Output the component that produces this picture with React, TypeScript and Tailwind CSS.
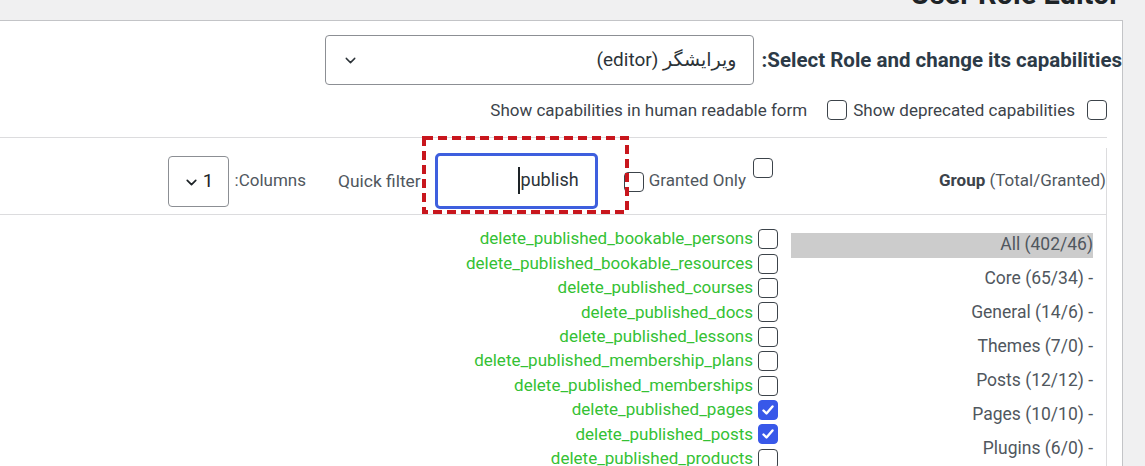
import React from "react";
import { ChevronDown } from "lucide-react";

function Box({ checked = false, className = "" }: { checked?: boolean; className?: string }) {
  return (
    <span
      className={
        "flex h-5 w-5 shrink-0 items-center justify-center rounded-[4px] border " +
        (checked ? "border-[#3858e9] bg-[#3858e9]" : "border-[#3c434a] bg-white") +
        " " +
        className
      }
    >
      {checked && (
        <svg width="16" height="16" viewBox="0 0 16 16" fill="none">
          <path d="M3.5 8.5l3 3L12.5 4.5" stroke="white" strokeWidth="2.4" strokeLinecap="round" strokeLinejoin="round" />
        </svg>
      )}
    </span>
  );
}

const caps: [string, boolean][] = [
  ["delete_published_bookable_persons", false],
  ["delete_published_bookable_resources", false],
  ["delete_published_courses", false],
  ["delete_published_docs", false],
  ["delete_published_lessons", false],
  ["delete_published_membership_plans", false],
  ["delete_published_memberships", false],
  ["delete_published_pages", true],
  ["delete_published_posts", true],
  ["delete_published_products", false],
];

const groups = [
  "All (402/46)",
  "Core (65/34) -",
  "General (14/6) -",
  "Themes (7/0) -",
  "Posts (12/12) -",
  "Pages (10/10) -",
  "Plugins (6/0) -",
];

export default function App() {
  return (
    <div className="h-[466px] w-[1145px] overflow-hidden bg-[#f0f0f1] font-[Roboto,'DejaVu_Sans',sans-serif]">
      <div className="flex h-[20px] justify-end overflow-hidden pr-[25px]">
        <h1 className="-mt-[20px] h-[29px] whitespace-nowrap text-[29px] font-bold leading-none text-[#1d2327]">User Role Editor</h1>
      </div>
      <div className="mr-[22px] h-[446px] border-r border-t border-[#c3c4c7] bg-white">
        {/* Role select row */}
        <div className="mt-[14px] flex items-center justify-end">
          <div className="flex h-[50px] w-[429px] items-center justify-between rounded-[4px] border border-[#8c8f94] bg-white pl-[16px] pr-[16px]">
            <ChevronDown size={17} strokeWidth={2} className="text-[#2c3338]" />
            <span dir="rtl" className="text-[19px] text-[#2c3338]">ویرایشگر (editor)</span>
          </div>
          <div className="ml-[8px] whitespace-nowrap text-[20.5px] font-bold leading-none text-[#2c3a47]">
            :Select Role and change its capabilities
          </div>
        </div>
        {/* options row */}
        <div className="mt-[15px] flex h-[20px] items-center justify-end pr-[15px] text-[17px] leading-5 text-[#3c434a]">
          <span>Show capabilities in human readable form</span>
          <Box className="ml-[20px]" />
          <span className="ml-[6px]">Show deprecated capabilities</span>
          <Box className="ml-[12px]" />
        </div>
        <div className="mr-[15px] mt-[17px] border-b border-[#dcdcde]" />
        {/* table */}
        <div className="mr-[15px] mt-[10px] h-[400px] border-r border-[#dcdcde]">
          <div className="relative flex h-[67px] items-center justify-end border-b border-[#dcdcde] text-[17px] text-[#50575e]">
            <div className="flex h-[51px] w-[61px] items-center justify-center gap-[3px] rounded-[4px] border border-[#8c8f94]">
              <ChevronDown size={17} strokeWidth={2.4} className="mt-[3px] text-[#1d2327]" />
              <span className="text-[19px] text-[#1d2327]">1</span>
            </div>
            <span className="ml-[6px]">:Columns</span>
            <span className="ml-[32px] text-[17.4px]">Quick filter</span>
            <div className="ml-[14px] flex h-[56px] w-[163px] items-center justify-end rounded-[5px] border-[3px] border-[#3e5fde] pr-[16px]">
              <span className="mb-[2px] mr-[1px] h-[27px] w-[2px] bg-[#1d2327]" />
              <span className="mb-[3px] text-[18px] leading-none text-[#2c3338]">publish</span>
            </div>
            <Box className="ml-[26px] mt-[2px]" />
            <span className="ml-[5px]">Granted Only</span>
            <Box className="mb-[27px] ml-[7px]" />
            <span className="ml-[166px] whitespace-nowrap">
              <b className="font-bold text-[#3c434a]">Group</b> (Total/Granted)
            </span>
            <svg className="absolute left-[422px] top-[-12px]" width="207" height="78" viewBox="0 0 207 78">
              <rect x="2" y="2" width="203" height="74" fill="none" stroke="#c8161d" strokeWidth="4" strokeDasharray="9 5" />
            </svg>
          </div>
          <div className="flex justify-end">
            <div className="flex-1 pr-[7px] pt-[12px]">
              {caps.map(([name, checked]) => (
                <div key={name} className="flex h-[24.4px] items-center justify-end">
                  <span className="text-[17px] text-[#34c134]">{name}</span>
                  <Box checked={checked} className="ml-[5px]" />
                </div>
              ))}
            </div>
            <div className="w-[321px] pl-[6px] pr-[13px] pt-[18px]">
              {groups.map((g, i) => (
                <div
                  key={g}
                  className={
                    "mb-[9px] h-[25px] whitespace-nowrap text-right text-[17.5px] leading-[23px] text-[#50575e] " +
                    (i === 0 ? "bg-[#cccccc]" : "")
                  }
                >
                  {g}
                </div>
              ))}
            </div>
          </div>
        </div>
      </div>
    </div>
  );
}
